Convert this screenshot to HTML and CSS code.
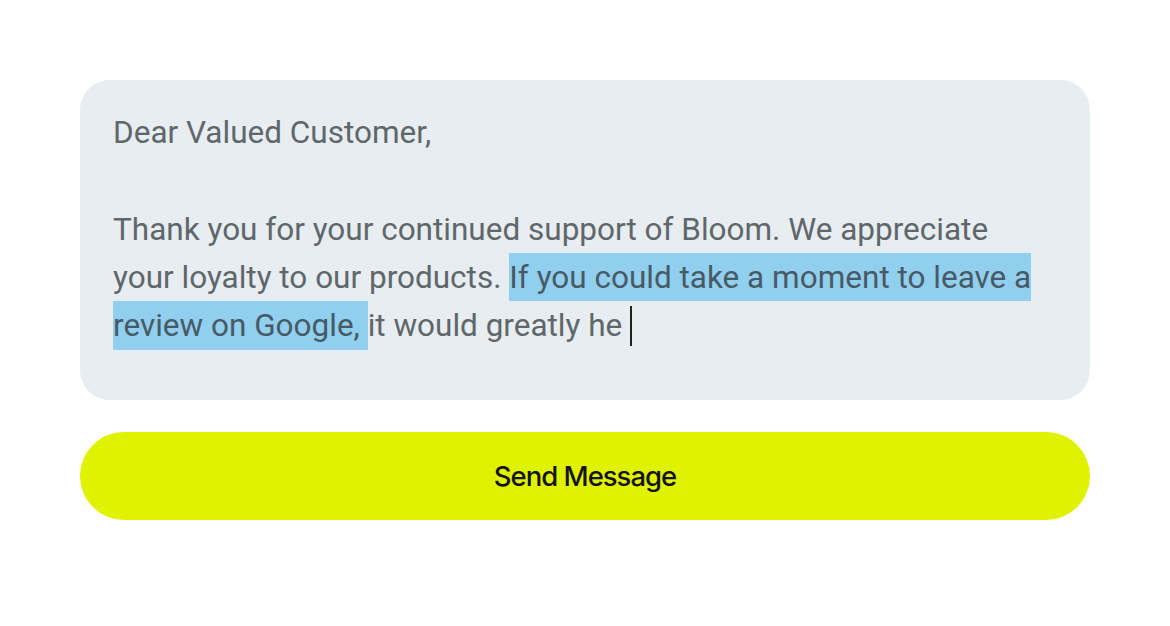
FILE: index.html
```html
<!DOCTYPE html>
<html>
<head>
<meta charset="utf-8">
<link rel="stylesheet" href="styles.css">
</head>
<body>
<main class="page">
  <div class="message">
    <p class="line">Dear Valued Customer,</p>
    <p class="line">&nbsp;</p>
    <p class="line">Thank you for your continued support of Bloom. We appreciate your loyalty to our products. <span class="sel">If you could take a moment to leave a review on Google, </span>it would greatly he <span class="caret"></span></p>
  </div>
  <button class="send">Send Message</button>
</main>
</body>
</html>
```
FILE: styles.css
```css
html, body {
  margin: 0;
  padding: 0;
  background: #ffffff;
}
.page {
  width: 1010px;
  padding: 80px 80px 0 80px;
  display: flex;
  flex-direction: column;
  gap: 32px;
}
.message {
  background: #e7edf0;
  border-radius: 30px;
  padding: 29px 47px 43px 33px;
  height: 320px;
  box-sizing: border-box;
  font-family: Roboto, "Liberation Sans", sans-serif;
  font-size: 31.5px;
  line-height: 48.3px;
  color: #60676a;
}
.line {
  margin: 0;
}
.sel {
  background: #91cfee;
  color: #485a66;
  padding: 6px 0 5.5px;
}
.caret {
  display: inline-block;
  width: 2px;
  height: 40px;
  background: #1e2418;
  vertical-align: -10px;
}
.send {
  height: 88px;
  border: none;
  border-radius: 44px;
  background: #dff200;
  font-family: Inter, "Liberation Sans", sans-serif;
  font-size: 27.5px;
  font-weight: 500;
  letter-spacing: -1px;
  color: #141414;
  cursor: pointer;
}
```
